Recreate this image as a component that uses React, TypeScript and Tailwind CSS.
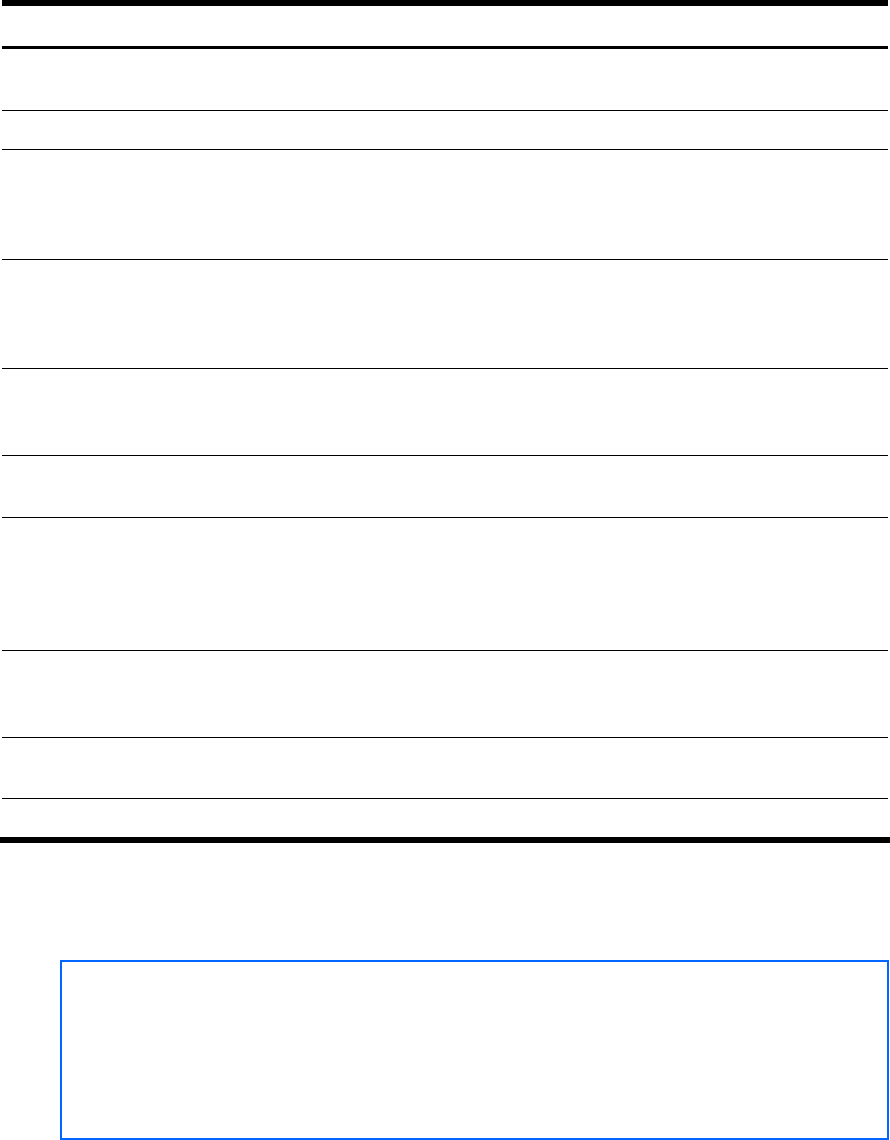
const rows = [62, 39, 110, 109, 87, 62, 133, 87, 61]

export default function App() {
  return (
    <div className="w-[890px] h-[1140px] bg-white overflow-hidden">
      <div className="mx-[2px]">
        <div className="h-[6px] bg-black" />
        <div className="h-[43px] border-b-[3px] border-black" />
        {rows.map((h, i) => (
          <div key={i} className="border-b border-black" style={{ height: h }} />
        ))}
        <div className="h-[38px]" />
      </div>
      <div className="h-[6px] bg-black" />
      <div className="mt-[117px] ml-[60px] w-[829px] h-[180px] border-2 border-[#0066ff]" />
    </div>
  )
}
